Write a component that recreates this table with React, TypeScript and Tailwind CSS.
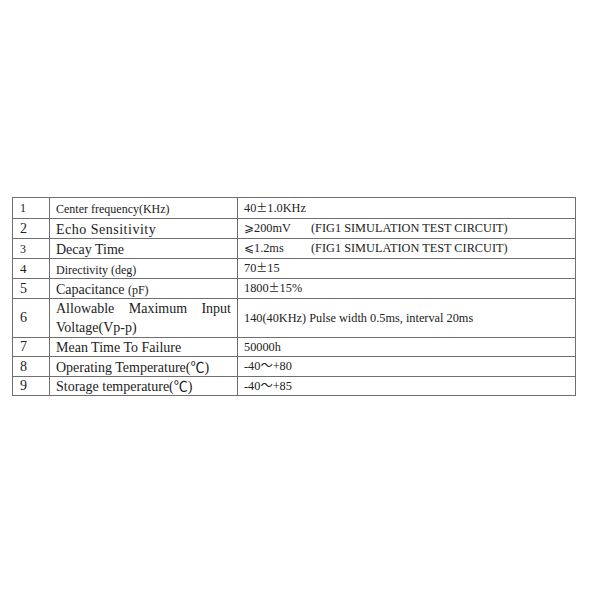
const serif = { fontFamily: '"Liberation Serif", "Times New Roman", "Noto Sans CJK SC", serif' };

function Pm() {
  return <span className="font-['Noto_Sans_CJK_SC'] text-[11px]">±</span>;
}

function Fig({ lead }: { lead: string }) {
  return (
    <>
      <span className="inline-block w-[67px]">{lead}</span>
      <span>(FIG1 SIMULATION TEST CIRCUIT)</span>
    </>
  );
}

type Row = {
  n: string;
  nSize: string;
  label: React.ReactNode;
  value: React.ReactNode;
  h: string;
};

const ROWS: Row[] = [
  {
    n: "1",
    nSize: "text-[12px]",
    label: <span className="text-[12px]">Center frequency(KHz)</span>,
    value: <>40<Pm />1.0KHz</>,
    h: "h-[21px]",
  },
  {
    n: "2",
    nSize: "text-[14px]",
    label: <span className="text-[14px] tracking-[0.5px]">Echo Sensitivity</span>,
    value: <Fig lead="⩾200mV" />,
    h: "h-[20px]",
  },
  {
    n: "3",
    nSize: "text-[12px]",
    label: <span className="text-[14px]">Decay Time</span>,
    value: <Fig lead="⩽1.2ms" />,
    h: "h-[20px]",
  },
  {
    n: "4",
    nSize: "text-[13px]",
    label: <span className="text-[12px]">Directivity (deg)</span>,
    value: <>70<Pm />15</>,
    h: "h-[20px]",
  },
  {
    n: "5",
    nSize: "text-[14px]",
    label: (
      <>
        <span className="text-[14px]">Capacitance </span>
        <span className="text-[12px]">(pF)</span>
      </>
    ),
    value: <>1800<Pm />15%</>,
    h: "h-[20px]",
  },
  {
    n: "6",
    nSize: "text-[14px]",
    label: (
      <span className="block text-justify text-[14px] leading-[19px]">
        Allowable Maximum Input Voltage(Vp-p)
      </span>
    ),
    value: <>140(40KHz) Pulse width 0.5ms, interval 20ms</>,
    h: "h-[39px]",
  },
  {
    n: "7",
    nSize: "text-[14px]",
    label: <span className="text-[14px]">Mean Time To Failure</span>,
    value: <>50000h</>,
    h: "h-[19px]",
  },
  {
    n: "8",
    nSize: "text-[14px]",
    label: <span className="text-[14px]">Operating Temperature(℃)</span>,
    value: <>-40～+80</>,
    h: "h-[20px]",
  },
  {
    n: "9",
    nSize: "text-[14px]",
    label: <span className="text-[14px]">Storage temperature(℃)</span>,
    value: <>-40～+85</>,
    h: "h-[19px]",
  },
];

export default function App() {
  return (
    <div className="w-[600px] h-[600px] bg-white pt-[197px] pl-[12px] text-[#222]" style={serif}>
      <table className="border-collapse table-fixed w-[563px]">
        <colgroup>
          <col className="w-[37px]" />
          <col className="w-[188px]" />
          <col className="w-[338px]" />
        </colgroup>
        <tbody>
          {ROWS.map((r) => (
            <tr key={r.n} className={r.h}>
              <td className={`border border-[#6f6f6f] pl-[7px] p-0 leading-none align-middle ${r.nSize}`}>{r.n}</td>
              <td className="border border-[#6f6f6f] pl-[6px] pr-[6px] p-0 leading-none align-middle">{r.label}</td>
              <td className="border border-[#6f6f6f] pl-[6px] p-0 leading-none align-middle text-[12.3px] whitespace-nowrap">
                {r.value}
              </td>
            </tr>
          ))}
        </tbody>
      </table>
    </div>
  );
}
